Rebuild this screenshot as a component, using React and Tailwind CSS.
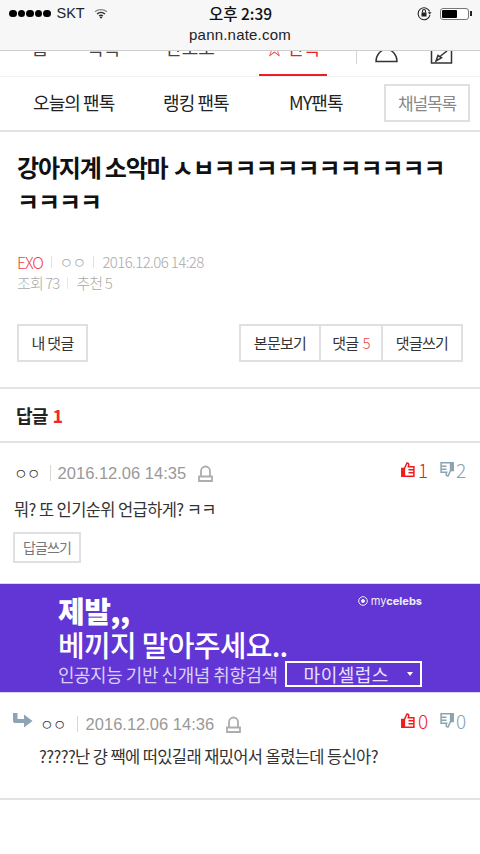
const kr = "font-['Noto_Sans_CJK_KR',sans-serif]";

const Wifi = () => (
  <svg width="14" height="11" viewBox="0 0 14 11" fill="none" stroke="#333" strokeWidth="1.3">
    <path d="M1 3.8C4.4.8 9.6.8 13 3.8" stroke="#888" />
    <path d="M3 6c2.300-2 5.700-2 8 0" />
    <path d="M5 8c1.200-.9 2.800-.9 4 0" />
    <path d="M7 10.800 5.600 9.200c.8-.6 2-.6 2.800 0z" fill="#222" stroke="none" />
  </svg>
);

const LockRotate = () => (
  <svg width="15" height="15" viewBox="0 0 15 15" fill="none" stroke="#222" strokeWidth="1.100">
    <path d="M12.700 5.500A6 6 0 1 0 13 9" />
    <path d="M10.800 6.200h3.800l-1.900 2.300z" fill="#222" stroke="none" />
    <rect x="4.500" y="6.500" width="5" height="4" fill="#222" stroke="none" />
    <path d="M5.500 6.500V5a1.500 1.500 0 0 1 3 0v1.500" />
  </svg>
);

const Battery = () => (
  <div className="flex items-center">
    <div className="flex h-[12px] w-[29px] rounded-[3px] border border-[#777] bg-white p-[1px]">
      <div className="h-full w-[15px] rounded-[1px] bg-black" />
    </div>
    <div className="ml-[1px] h-[5px] w-[2px] bg-[#222]" />
  </div>
);

const Bell = () => (
  <svg width="15" height="17" viewBox="0 0 15 17" fill="none" stroke="#adadad" strokeWidth="1.800">
    <path d="M3 11V6a4.500 4.500 0 0 1 9 0v5" />
    <path d="M1 11.500h13V16H1z" />
  </svg>
);

const ThumbUp = () => (
  <svg width="14" height="15" viewBox="0 0 14 15" fill="none" stroke="#f01c1c" strokeWidth="1.500">
    <path d="M.8 6.500h2.600v7.700H.8z" fill="#f01c1c" />
    <path d="M3.400 6.500 6 .9c1.500 0 2 1 1.700 2.300l-.4 1.600h5.600v9.400H3.400" />
    <path d="M7.500 7.700h5.400M7.500 10.700h5.400" />
  </svg>
);

const ThumbDown = () => (
  <svg width="14" height="15" viewBox="0 0 14 15" fill="none" stroke="#8aa3b0" strokeWidth="1.500">
    <path d="M13.200 8.500h-2.600V.8h2.600z" fill="#8aa3b0" />
    <path d="M10.600 8.500 8 14.100c-1.500 0-2-1-1.700-2.300l.4-1.600H1.100V.8h9.500" />
    <path d="M6.500 7.300H1.100M6.500 4.300H1.100" />
  </svg>
);

const ReplyArrow = () => (
  <svg width="20" height="16" viewBox="0 0 20 16" fill="#8fa3b5">
    <path d="M0 0h4.500v6H11V1.500L19.500 8 11 14.500V10H2a2 2 0 0 1-2-2z" />
  </svg>
);

const Votes = ({ up, down }) => (
  <div className={`-mt-[3px] flex items-center text-[19px] font-light leading-none ${kr}`}>
    <ThumbUp />
    <span className="ml-[3px] w-[17px] text-[#f01c1c]">{up}</span>
    <span className="ml-[5px]"><ThumbDown /></span>
    <span className="ml-[2px] w-[10px] text-[#8aa3b0]">{down}</span>
  </div>
);

export default function App() {
  return (
    <div className={`h-[854px] w-[480px] overflow-hidden bg-white ${kr}`}>
      <div className="h-[51px] border-b border-[#cfcfcf] bg-[#f7f7f7]">
        <div className="flex h-[27px] items-center justify-between pl-[9px] pr-[8px]">
          <div className="flex w-[130px] items-center">
            <div className="flex gap-[1px]">
              {[0, 1, 2, 3, 4].map((i) => (
                <div key={i} className="h-[7.500px] w-[7.500px] rounded-full bg-black" />
              ))}
            </div>
            <span className="ml-[6px] font-['Liberation_Sans',sans-serif] text-[14.500px] text-[#222]">SKT</span>
            <span className="ml-[9px]"><Wifi /></span>
          </div>
          <span className="text-[15.500px] font-medium text-[#111]">오후 2:39</span>
          <div className="flex w-[130px] items-center justify-end gap-[8px]">
            <LockRotate />
            <Battery />
          </div>
        </div>
        <div className="text-center font-['Liberation_Sans',sans-serif] text-[15px] leading-[16px] tracking-[0.2px] text-[#222]">pann.nate.com</div>
      </div>

      <div className="flex h-[26px] overflow-hidden border-b border-[#f2f2f2]">
        <div className="flex w-[356px] items-start text-[18px] leading-[20px] text-[#444]">
          <div className="-mt-[14px] w-[80px] text-center">홈</div>
          <div className="-mt-[14px] w-[48px] text-center">톡톡</div>
          <div className="-mt-[14px] w-[124px] text-center">판포토</div>
          <div className="ml-[7px] flex h-full w-[68px] flex-col items-center justify-between border-b-[2px] border-[#ee1c25]">
            <div className="-mt-[14px] text-[#ee1c25]">☆ 판톡</div>
          </div>
        </div>
        <div className="h-[13px] w-px bg-[#d4d4d4]" />
        <div className="flex items-start">
          <svg className="-mt-[2px] ml-[18px]" width="23" height="14" viewBox="0 0 23 14" fill="none" stroke="#333" strokeWidth="1.400">
            <path d="M1 12.500a10.500 12 0 0 1 21 0z" />
          </svg>
          <svg className="ml-[32px]" width="23" height="13" viewBox="0 0 23 13" fill="none" stroke="#333" strokeWidth="1.500">
            <path d="M1.500 0v12h20V0" />
            <path d="M6 10 8 4.500l3.500 2.300zM10.500 5 17 0" />
          </svg>
        </div>
      </div>

      <div className="flex h-[55px] items-center border-b-[2px] border-[#e3e3e3] pb-[2px] text-[18px] tracking-[-0.9px] text-[#222]">
        <div className="ml-[33px] w-[130px]">오늘의 팬톡</div>
        <div className="w-[126px]">랭킹 팬톡</div>
        <div className="w-[95px]">MY팬톡</div>
        <div className="flex h-[38px] w-[86px] items-center justify-center border-2 border-[#e0e0e0] text-[17px] tracking-[-1.1px] text-[#888]">채널목록</div>
      </div>

      <div className="px-[17px] pt-[18px]">
        <h1 className="text-[24px] font-bold leading-[34px] tracking-[-1.2px] text-[#111]">
          강아지계 소악마 <span className="tracking-[-1.1px]">ㅅㅂㅋㅋㅋㅋㅋㅋㅋㅋㅋㅋㅋ</span><span className="tracking-[-1.1px]"> ㅋㅋㅋㅋ</span>
        </h1>
        <div className="mt-[34px] flex items-center text-[15px] font-light leading-[20px] tracking-[-0.9px] text-[#aaa]">
          <span className="text-[16px] tracking-[-1.2px] text-[#f0424a]">EXO</span>
          <span className="mx-[8px] h-[12px] w-px bg-[#e2e2e2]" />
          <span>ㅇㅇ</span>
          <span className="mx-[8px] h-[12px] w-px bg-[#e2e2e2]" />
          <span className="tracking-[-0.6px]">2016.12.06 14:28</span>
        </div>
        <div className="mt-px flex items-center text-[15px] font-light leading-[20px] tracking-[-0.9px] text-[#aaa]">
          <span>조회 73</span>
          <span className="mx-[8px] h-[12px] w-px bg-[#e8e8e8]" />
          <span>추천 5</span>
        </div>
        <div className="mt-[31px] flex items-center justify-between text-[15px] tracking-[-0.7px] text-[#333]">
          <div className="flex h-[38px] w-[71px] items-center justify-center border-2 border-[#e0e0e0]">내 댓글</div>
          <div className="flex h-[38px] w-[224px] border-2 border-[#e0e0e0]">
            <div className="flex flex-1 items-center justify-center">본문보기</div>
            <div className="flex w-[64px] items-center justify-center gap-[4px] border-x-2 border-[#e0e0e0]">댓글 <span className="font-light text-[#f0424a]">5</span></div>
            <div className="flex w-[78px] items-center justify-center">댓글쓰기</div>
          </div>
        </div>
      </div>

      <div className="mt-[25px] flex h-[56px] items-center border-y-2 border-[#e3e3e3] pl-[16px] text-[18px] font-bold tracking-[-0.8px] text-[#222]">
        답글<span className="ml-[5px] text-[#f0282d]">1</span>
      </div>

      <div className="h-[140px] pl-[14px] pr-[14px] pt-[20px]">
        <div className="flex items-start justify-between">
          <div className="flex items-center text-[15px] leading-[20px] text-[#999]">
            <span className="font-light tracking-[-1px] text-[#333]">ㅇㅇ</span>
            <span className="ml-[10px] mr-[7px] h-[16px] w-px bg-[#d8d8d8]" />
            <span className="font-['Liberation_Sans',sans-serif] text-[16.500px]">2016.12.06 14:35</span>
            <span className="ml-[12px]"><Bell /></span>
          </div>
          <Votes up="1" down="2" />
        </div>
        <p className="mt-[15px] text-[16.500px] leading-[22px] tracking-[-0.6px] text-[#333]">뭐? 또 인기순위 언급하게? ㅋㅋ</p>
        <div className="-ml-px mt-[12px] flex h-[31px] w-[68px] items-center justify-center border-2 border-[#e0e0e0] text-[14px] tracking-[-0.9px] text-[#777]">답글쓰기</div>
      </div>

      <div className="h-[110px] border-y border-[#dcd6ee] bg-[#6236d5] px-[58px] pt-[8px] text-white">
        <div className="flex items-start justify-between">
          <div className="text-[29px] font-black leading-[36px] tracking-[-0.5px]">제발,,</div>
          <div className="mt-[2px] flex items-center gap-[3px] font-['Inter',sans-serif] text-[11px] font-bold leading-[14px] text-[#eee]">
            <svg width="10" height="10" viewBox="0 0 10 10" fill="none" stroke="#eee"><circle cx="5" cy="5" r="4.300" /><circle cx="5" cy="5" r="1.500" fill="#eee" /></svg>
            <span><span className="font-normal">my</span>celebs</span>
          </div>
        </div>
        <div className="text-[29px] font-medium leading-[33px] tracking-[-0.7px]">베끼지 말아주세요..</div>
        <div className="flex items-center">
          <span className="whitespace-nowrap text-[17.900px] leading-[25px] tracking-[-0.4px] text-[#dbd0f7]">인공지능 기반 신개념 취향검색</span>
          <div className="ml-[7px] flex h-[26px] w-[137px] shrink-0 items-center border-2 border-white pl-[17px] text-[18px] tracking-[0.5px] text-[#e8e0fa]">
            마이셀럽스
            <div className="ml-[18px] h-0 w-0 border-x-[3px] border-t-[4px] border-x-transparent border-t-white" />
          </div>
        </div>
      </div>

      <div className="h-[107px] border-b-2 border-[#e3e3e3] pl-[13px] pr-[14px] pt-[21px]">
        <div className="flex items-start justify-between">
          <div className="flex items-center text-[15px] leading-[20px] text-[#999]">
            <div className="-mt-[6px]"><ReplyArrow /></div>
            <span className="ml-[7px] font-light tracking-[-1px] text-[#333]">ㅇㅇ</span>
            <span className="ml-[11px] mr-[8px] h-[16px] w-px bg-[#d8d8d8]" />
            <span className="font-['Liberation_Sans',sans-serif] text-[16.500px]">2016.12.06 14:36</span>
            <span className="ml-[12px]"><Bell /></span>
          </div>
          <Votes up="0" down="0" />
        </div>
        <p className="ml-[26px] mt-[11px] text-[16.500px] leading-[22px] tracking-[-0.6px] text-[#333]">?????난 걍 짹에 떠있길래 재밌어서 올렸는데 등신아?</p>
      </div>
    </div>
  );
}
